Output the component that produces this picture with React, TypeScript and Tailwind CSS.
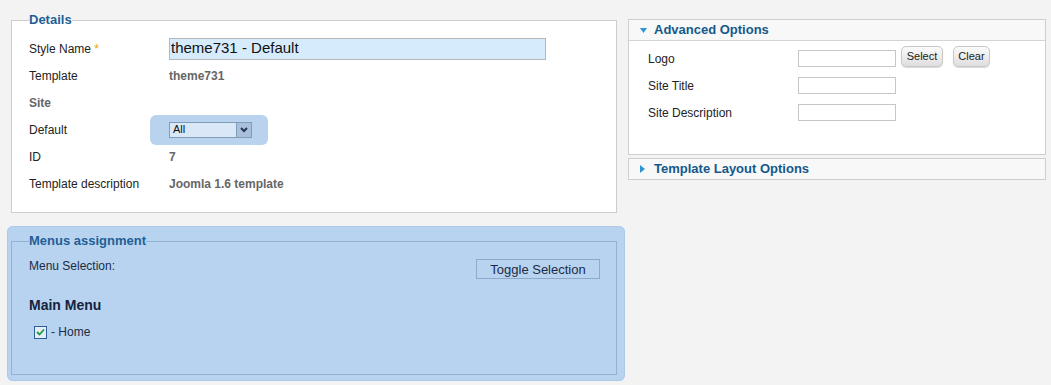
import React from "react";

const Row = ({ label, children, h = "h-[27px]" }: { label: React.ReactNode; children?: React.ReactNode; h?: string }) => (
  <div className={`flex items-center ${h}`}>
    <div className="w-[140px] shrink-0 text-[12px] text-[#222]">{label}</div>
    <div className="flex items-center">{children}</div>
  </div>
);

const Val = ({ children }: { children: React.ReactNode }) => (
  <span className="text-[12px] font-bold text-[#666]">{children}</span>
);

const Tri = ({ down }: { down?: boolean }) =>
  down ? (
    <svg width="7" height="5" viewBox="0 0 7 5" className="shrink-0">
      <path d="M0 0 H7 L3.5 5 Z" fill="#2f95d0" />
    </svg>
  ) : (
    <svg width="5" height="8" viewBox="0 0 5 8" className="shrink-0">
      <path d="M0 0 V8 L5 4 Z" fill="#2f95d0" />
    </svg>
  );

const GrayBtn = ({ children, w }: { children: React.ReactNode; w: string }) => (
  <button
    className={`${w} h-[21px] rounded-[5px] border border-[#c8c8c8] bg-gradient-to-b from-[#fbfbfb] to-[#dedede] text-[11px] text-[#222] leading-none shadow-[0_1px_1px_rgba(0,0,0,0.15)]`}
  >
    {children}
  </button>
);

const TextInput = () => (
  <div className="w-[98px] h-[17px] border border-[#c6c6c6] bg-white" />
);

export default function App() {
  return (
    <div className="w-[1051px] h-[385px] bg-[#f3f3f3] font-['Liberation_Sans',Arial,sans-serif] flex items-start overflow-hidden">
      {/* Left column */}
      <div className="ml-[7px] mt-[12px] w-[618px] flex flex-col">
        <fieldset className="ml-[4px] mr-[8px] border border-[#cdcdcd] bg-white px-[17px] pt-[7px] pb-[15px]">
          <legend className="text-[13px] leading-[16px] font-bold text-[#1f5f95]">Details</legend>
          <Row label={<span>Style Name <span className="text-[#f5a000]">*</span></span>}>
            <div className="w-[377px] h-[22px] border border-[#b7b7b7] bg-[#d6ebfc] flex items-center pl-[1px] text-[15px] text-[#111]">
              theme731 - Default
            </div>
          </Row>
          <Row label="Template">
            <Val>theme731</Val>
          </Row>
          <Row label={<span className="font-bold text-[#666]">Site</span>}></Row>
          <Row label="Default">
            <div className="ml-[-19px] h-[30px] w-[118px] rounded-[6px] bg-[#b9d3ef] flex items-center pl-[19px]">
              <div className="w-[83px] h-[16px] border border-[#7f9db9] bg-[#dae7f6] flex items-center">
                <span className="flex-1 pl-[3px] text-[11px] leading-none text-[#111]">All</span>
                <div className="w-[15px] h-[14px] bg-[#a9bfdc] border-l border-[#7f9db9] flex items-center justify-center">
                  <svg width="8" height="6" viewBox="0 0 8 6">
                    <path d="M1 1 L4 4 L7 1" stroke="#24395c" strokeWidth="2" fill="none" />
                  </svg>
                </div>
              </div>
            </div>
          </Row>
          <Row label="ID">
            <Val>7</Val>
          </Row>
          <Row label="Template description">
            <Val>Joomla 1.6 template</Val>
          </Row>
        </fieldset>

        <div className="mt-[13px] rounded-[6px] bg-[#b8d3f0] shadow-[inset_0_0_0_1px_#afcae8] pl-[4px] pr-[8px] pt-[7px] pb-[6px]">
          <fieldset className="border border-[#95b0d0] px-[17px] pt-[10px] h-[142px]">
            <legend className="text-[13px] leading-[16px] font-bold text-[#1f5f95]">Menus assignment</legend>
            <div className="flex items-start justify-between">
              <span className="text-[12px] leading-[14px] text-[#1b2b45]">Menu Selection:</span>
              <button className="mr-[-1px] w-[124px] h-[20px] border border-[#8eaacb] bg-[#b8d3f0] text-[13px] text-[#1b2b45] leading-none">
                Toggle Selection
              </button>
            </div>
            <div className="mt-[16px] text-[14px] font-bold text-[#13233d] leading-[20px]">Main Menu</div>
            <div className="mt-[9px] flex items-center h-[16px] pl-[5px]">
              <div className="w-[13px] h-[13px] border border-[#2e5e9a] bg-[#e5eef8] flex items-center justify-center">
                <svg width="9" height="8" viewBox="0 0 9 8">
                  <path d="M1 4 L3.5 6.5 L8 1.5" stroke="#1e9a3c" strokeWidth="1.8" fill="none" />
                </svg>
              </div>
              <span className="ml-[4px] text-[12px] text-[#1b2b45]">- Home</span>
            </div>
          </fieldset>
        </div>
      </div>

      {/* Right column */}
      <div className="ml-[3px] mt-[19px] w-[418px] flex flex-col gap-[3px]">
        <div className="border border-[#cfcfcf] bg-white h-[136px]">
          <div className="h-[21px] bg-[#f8f8f8] border-b border-[#d3d3d3] flex items-center pl-[11px] gap-[7px]">
            <Tri down />
            <span className="text-[13px] font-bold text-[#14588c]">Advanced Options</span>
          </div>
          <div className="pl-[19px] pt-[4px] flex flex-col">
            <div className="flex items-center h-[27px]">
              <div className="w-[150px] text-[12px] text-[#222]">Logo</div>
              <TextInput />
              <div className="ml-[5px] mt-[-8px]">
                <GrayBtn w="w-[42px]">Select</GrayBtn>
              </div>
              <div className="ml-[10px] mt-[-8px]">
                <GrayBtn w="w-[37px]">Clear</GrayBtn>
              </div>
            </div>
            <div className="flex items-center h-[27px]">
              <div className="w-[150px] text-[12px] text-[#222]">Site Title</div>
              <TextInput />
            </div>
            <div className="flex items-center h-[27px]">
              <div className="w-[150px] text-[12px] text-[#222]">Site Description</div>
              <TextInput />
            </div>
          </div>
        </div>
        <div className="border border-[#cfcfcf] bg-[#f8f8f8] h-[22px] flex items-center pl-[11px] gap-[9px]">
          <Tri />
          <span className="text-[13px] font-bold text-[#14588c]">Template Layout Options</span>
        </div>
      </div>
    </div>
  );
}
